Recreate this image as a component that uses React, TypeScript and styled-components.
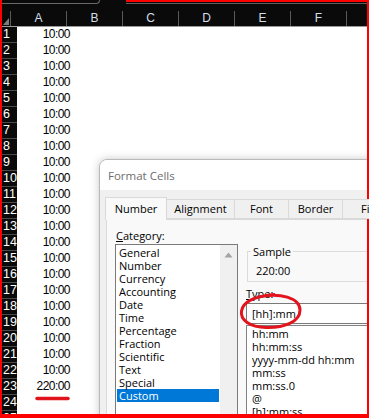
import React from "react";
import styled, { createGlobalStyle } from "styled-components";

const Global = createGlobalStyle`
  html, body { margin: 0; padding: 0; background: #ffffff; }
  * { box-sizing: border-box; }
`;

const Frame = styled.div`
  position: relative;
  width: 369px;
  height: 418px;
  overflow: hidden;
  padding-left: 2px;
  background: #ffffff;
  font-family: "Liberation Sans", Arial, sans-serif;
`;

const TopStrip = styled.div`
  height: 11px;
  background: #0a0a0a;
  display: flex;
  align-items: flex-start;
`;

const NameBoxEdge = styled.div`
  width: 98px;
  height: 4px;
  border-bottom: 1px solid #6a6a6a;
  border-right: 1px solid #6a6a6a;
  border-bottom-right-radius: 4px;
`;

const FormulaEdge = styled.div`
  margin-left: 26px;
  flex: 1;
  height: 4px;
  border-bottom: 1px solid #5e5e5e;
`;

const HeaderRow = styled.div`
  display: flex;
  height: 16px;
  background: #0a0a0a;
  border-bottom: 1px solid #9a9a9a;
`;

const Corner = styled.div`
  width: 15px;
  height: 15px;
  border-right: 1px solid #5b5b5b;
  display: flex;
  align-items: flex-end;
  justify-content: flex-end;
`;

const ColHead = styled.div`
  width: 56px;
  flex: none;
  height: 15px;
  border-right: 1px solid #5b5b5b;
  color: #d3dfeb;
  font-size: 12px;
  line-height: 15px;
  text-align: center;
`;

const Row = styled.div`
  display: flex;
  height: 16px;
`;

const RowHead = styled.div`
  width: 15px;
  flex: none;
  height: 16px;
  background: #0a0a0a;
  border-bottom: 1px solid #4a4a4a;
  color: #ffffff;
  font-size: 12.5px;
  line-height: 15px;
  padding-left: 1px;
  overflow: hidden;
  white-space: nowrap;
`;

const Cell = styled.div`
  width: 56px;
  flex: none;
  height: 16px;
  color: #000000;
  font-size: 12px;
  letter-spacing: -0.55px;
  line-height: 15px;
  text-align: right;
  padding-right: 3px;
`;

const Dialog = styled.div`
  position: absolute;
  left: 99px;
  top: 159px;
  width: 300px;
  height: 290px;
  background: #f0f0f0;
  border: 1px solid #b9b9b9;
  border-radius: 8px 8px 0 0;
  box-shadow: 0 0 9px rgba(0, 0, 0, 0.22);
  overflow: hidden;
  font-family: "Open Sans", "Noto Sans", sans-serif;
  font-size: 11px;
  color: #000000;
`;

const TitleBar = styled.div`
  height: 30px;
  background: #ffffff;
  padding-left: 8px;
  line-height: 31px;
  font-size: 11.5px;
  color: #6e6e6e;
`;

const Body = styled.div`
  padding: 7px 0 0 6px;
`;

const Tabs = styled.div`
  display: flex;
  align-items: flex-end;
  height: 22px;
  position: relative;
  z-index: 1;
`;

const Tab = styled.div<{ $w: number; $active?: boolean }>`
  width: ${(p) => p.$w}px;
  flex: none;
  height: ${(p) => (p.$active ? 23 : 20)}px;
  margin-bottom: ${(p) => (p.$active ? -1 : 0)}px;
  background: ${(p) => (p.$active ? "#f9f9f9" : "#f0f0f0")};
  border: 1px solid #d9d9d9;
  border-bottom: ${(p) => (p.$active ? "none" : "1px solid #d9d9d9")};
  margin-left: -1px;
  text-align: center;
  line-height: ${(p) => (p.$active ? 22 : 18)}px;
  white-space: nowrap;
`;

const Panel = styled.div`
  border: 1px solid #d9d9d9;
  background: #f9f9f9;
  height: 240px;
  display: flex;
  padding-left: 8px;
`;

const LeftCol = styled.div`
  width: 123px;
  flex: none;
  padding-top: 8px;
`;

const Label = styled.div`
  line-height: 15px;
  padding-left: 1px;
  white-space: nowrap;
`;

const U = styled.span`
  text-decoration: underline;
  text-underline-offset: 1px;
`;

const ListBox = styled.div`
  margin-top: 1px;
  height: 190px;
  border: 1px solid #7a7a7a;
  background: #ffffff;
  display: flex;
`;

const Items = styled.div`
  flex: 1;
  padding: 1px 1px 0 1px;
`;

const Item = styled.div<{ $selected?: boolean }>`
  height: 13px;
  line-height: 13px;
  padding-left: 2px;
  white-space: nowrap;
  background: ${(p) => (p.$selected ? "#0078d7" : "transparent")};
  color: ${(p) => (p.$selected ? "#ffffff" : "#000000")};
`;

const ScrollTrack = styled.div`
  width: 17px;
  flex: none;
  background: #f0f0f0;
`;

const ArrowBox = styled.div`
  height: 17px;
  display: flex;
  align-items: center;
  justify-content: center;
  padding-top: 2px;
`;

const RightCol = styled.div`
  flex: 1;
  margin-left: 8px;
  padding-top: 31px;
`;

const GroupBox = styled.div`
  border: 1px solid #dcdcdc;
  border-right: none;
  height: 31px;
  margin-left: 1px;
`;

const Legend = styled.div`
  margin: -8px 0 0 3px;
  width: fit-content;
  padding: 0 2px;
  background: #f9f9f9;
  line-height: 15px;
`;

const SampleValue = styled.div`
  margin-top: 4px;
  padding-left: 8px;
  line-height: 15px;
`;

const TypeLabel = styled.div`
  margin-top: 4px;
  line-height: 15px;
`;

const TypeInput = styled.div`
  margin-top: 2px;
  height: 21px;
  border: 1px solid #7a7a7a;
  border-right: none;
  background: #ffffff;
  padding-left: 5px;
  line-height: 19px;
`;

const TypeList = styled.div`
  margin-top: 1px;
  height: 120px;
  border: 1px solid #828282;
  border-right: none;
  background: #ffffff;
  padding: 1px 0 0 5px;
`;

const TypeItem = styled.div`
  height: 13px;
  line-height: 13px;
  white-space: nowrap;
`;

const Overlay = styled.svg`
  position: absolute;
  left: 0;
  top: 0;
  width: 369px;
  height: 418px;
  pointer-events: none;
`;

const columns = ["A", "B", "C", "D", "E", "F", ""];
const values: string[] = [];
for (let i = 0; i < 22; i++) values.push("10:00");
values.push("220:00");
values.push("");
values.push("");

const categories = [
  "General",
  "Number",
  "Currency",
  "Accounting",
  "Date",
  "Time",
  "Percentage",
  "Fraction",
  "Scientific",
  "Text",
  "Special",
  "Custom",
];

const types = ["hh:mm", "hh:mm:ss", "yyyy-mm-dd hh:mm", "mm:ss", "mm:ss.0", "@", "[h]:mm:ss"];

const tabs: { name: string; w: number }[] = [
  { name: "Number", w: 62 },
  { name: "Alignment", w: 69 },
  { name: "Font", w: 55 },
  { name: "Border", w: 55 },
  { name: "Fill", w: 52 },
];

export default function App() {
  return (
    <>
      <Global />
      <Frame>
        <TopStrip>
          <NameBoxEdge />
          <FormulaEdge />
        </TopStrip>
        <HeaderRow>
          <Corner>
            <svg width="8" height="9" viewBox="0 0 8 9">
              <polygon points="1,8 7,8 7,1" fill="#7d7d7d" />
            </svg>
          </Corner>
          {columns.map((c, i) => (
            <ColHead key={i}>{c}</ColHead>
          ))}
        </HeaderRow>
        {values.map((v, i) => (
          <Row key={i}>
            <RowHead>{i + 1}</RowHead>
            <Cell>{v}</Cell>
          </Row>
        ))}

        <Dialog>
          <TitleBar>Format Cells</TitleBar>
          <Body>
            <Tabs>
              {tabs.map((t, i) => (
                <Tab key={t.name} $w={t.w} $active={i === 0}>
                  {t.name}
                </Tab>
              ))}
            </Tabs>
            <Panel>
              <LeftCol>
                <Label>
                  <U>C</U>ategory:
                </Label>
                <ListBox>
                  <Items>
                    {categories.map((c) => (
                      <Item key={c} $selected={c === "Custom"}>
                        {c}
                      </Item>
                    ))}
                  </Items>
                  <ScrollTrack>
                    <ArrowBox>
                      <svg width="9" height="6" viewBox="0 0 9 6">
                        <polygon points="0.5,5.5 8.5,5.5 4.5,0.5" fill="#a3a3a3" />
                      </svg>
                    </ArrowBox>
                  </ScrollTrack>
                </ListBox>
              </LeftCol>
              <RightCol>
                <GroupBox>
                  <Legend>Sample</Legend>
                  <SampleValue>220:00</SampleValue>
                </GroupBox>
                <TypeLabel>
                  <U>T</U>ype:
                </TypeLabel>
                <TypeInput>[hh]:mm</TypeInput>
                <TypeList>
                  {types.map((t) => (
                    <TypeItem key={t}>{t}</TypeItem>
                  ))}
                </TypeList>
              </RightCol>
            </Panel>
          </Body>
        </Dialog>

        <Overlay viewBox="0 0 369 418">
          <path
            d="M 37 398.5 L 68 398.5"
            stroke="#e0141c"
            strokeWidth="3.5"
            strokeLinecap="round"
            fill="none"
          />
          <path
            d="M 258 297 C 280 292, 300 298, 300 310 C 300 322, 284 328, 266 327.5 C 250 327, 240 320, 241.5 311 C 243 302, 252 297, 274 294.5"
            stroke="#e2141e"
            strokeWidth="3"
            strokeLinecap="round"
            fill="none"
          />
          <rect x="0" y="0" width="2" height="418" fill="#ff0000" />
          <rect x="367" y="0" width="2" height="418" fill="#ff0000" />
          <rect x="0" y="414" width="369" height="4" fill="#ff0000" />
          <rect x="126" y="0" width="243" height="2" fill="#ff0000" />
        </Overlay>
      </Frame>
    </>
  );
}
